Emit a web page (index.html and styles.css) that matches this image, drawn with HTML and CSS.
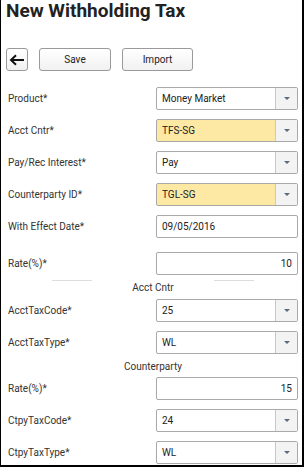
FILE: index.html
```html
<!DOCTYPE html>
<html>
<head>
<meta charset="utf-8">
<link rel="stylesheet" href="styles.css">
</head>
<body>
<div class="frame">
  <h1 class="title">New Withholding Tax</h1>
  <div class="toolbar">
    <button class="btn btn-back" aria-label="Back">
      <svg width="16" height="12" viewBox="0 0 16 12"><path d="M15 6H2.5M7 1.2L2 6l5 4.8" fill="none" stroke="#111" stroke-width="2"/></svg>
    </button>
    <button class="btn btn-text">Save</button>
    <button class="btn btn-text btn-import">Import</button>
  </div>

  <div class="form">
    <div class="row"><span class="label">Product*</span><div class="select"><span class="val">Money Market</span><span class="arrow"></span></div></div>
    <div class="row"><span class="label">Acct Cntr*</span><div class="select hl"><span class="val">TFS-SG</span><span class="arrow"></span></div></div>
    <div class="row"><span class="label">Pay/Rec Interest*</span><div class="select"><span class="val">Pay</span><span class="arrow"></span></div></div>
    <div class="row"><span class="label">Counterparty ID*</span><div class="select hl"><span class="val">TGL-SG</span><span class="arrow"></span></div></div>
    <div class="row"><span class="label">With Effect Date*</span><div class="input"><span class="val">09/05/2016</span></div></div>
    <div class="row row-gap"><span class="label">Rate(%)*</span><div class="input num"><span class="val">10</span></div></div>

    <div class="section section-lined"><span class="line"></span><span class="section-title">Acct Cntr</span><span class="line"></span></div>
    <div class="row"><span class="label">AcctTaxCode*</span><div class="select"><span class="val">25</span><span class="arrow"></span></div></div>
    <div class="row"><span class="label">AcctTaxType*</span><div class="select"><span class="val">WL</span><span class="arrow"></span></div></div>

    <div class="section section-plain"><span class="section-title">Counterparty</span></div>
    <div class="row"><span class="label">Rate(%)*</span><div class="input num"><span class="val">15</span></div></div>
    <div class="row"><span class="label">CtpyTaxCode*</span><div class="select"><span class="val">24</span><span class="arrow"></span></div></div>
    <div class="row"><span class="label">CtpyTaxType*</span><div class="select"><span class="val">WL</span><span class="arrow"></span></div></div>
  </div>
</div>
</body>
</html>
```

FILE: styles.css
```css
html, body {
  margin: 0;
  padding: 0;
  background: #fff;
}
body {
  font-family: Roboto, "Liberation Sans", Arial, sans-serif;
  color: #333;
}
.frame {
  width: 301px;
  height: 465px;
  border-left: 1px solid #000;
  border-right: 2px solid #000;
  border-bottom: 2px solid #000;
  box-sizing: content-box;
  overflow: hidden;
}
.title {
  margin: 0;
  padding: 0 0 0 5px;
  font-size: 19px;
  line-height: 22px;
  font-weight: bold;
  color: #222;
}
.toolbar {
  display: flex;
  align-items: center;
  gap: 11px;
  padding: 26px 0 0 5px;
}
.btn {
  height: 23px;
  box-sizing: border-box;
  border: 1px solid #9a9a9a;
  border-radius: 3px;
  background: linear-gradient(#ffffff, #f1f1f1);
  font-family: Roboto, "Liberation Sans", Arial, sans-serif;
  font-size: 10px;
  color: #222;
  padding: 0;
  display: flex;
  align-items: center;
  justify-content: center;
}
.btn-back {
  width: 22px;
}
.btn-text {
  width: 72px;
}
.btn-import {
  width: 71px;
}
.form {
  padding: 16px 4px 0 7px;
  display: flex;
  flex-direction: column;
}
.row {
  display: flex;
  align-items: center;
  justify-content: space-between;
  height: 23px;
  margin-bottom: 9px;
}
.row-gap {
  margin-top: 5px;
}
.label {
  font-size: 10px;
  color: #333;
}
.select, .input {
  width: 142px;
  height: 23px;
  box-sizing: border-box;
  border: 1px solid #a9a9a9;
  border-radius: 2px;
  background: #fff;
  display: flex;
  align-items: stretch;
}
.select.hl {
  background: #fde9a4;
}
.val {
  flex: 1;
  display: flex;
  align-items: center;
  padding-left: 5px;
  font-size: 10px;
  color: #222;
}
.input.num .val {
  justify-content: flex-end;
  padding-right: 5px;
}
.arrow {
  width: 21px;
  border-left: 1px solid #c8c8c8;
  background: #f3f3f3;
  position: relative;
}
.arrow::after {
  content: "";
  position: absolute;
  left: 8px;
  top: 9px;
  border-left: 3px solid transparent;
  border-right: 3px solid transparent;
  border-top: 3px solid #5a6b7b;
}
.section {
  display: flex;
  justify-content: center;
  align-items: flex-start;
  font-size: 10px;
  color: #333;
}
.section-title {
  line-height: 13px;
}
.section-lined {
  height: 19px;
  margin-top: -4px;
}
.section-lined .line {
  width: 40px;
  height: 1px;
  background: #ddd;
  margin-top: 0;
}
.section-lined .section-title {
  padding: 1px 40px 0;
}
.section-plain {
  height: 18px;
  margin: -5px 0 1px;
}
.section-plain .section-title {
  padding-top: 2px;
}
```
